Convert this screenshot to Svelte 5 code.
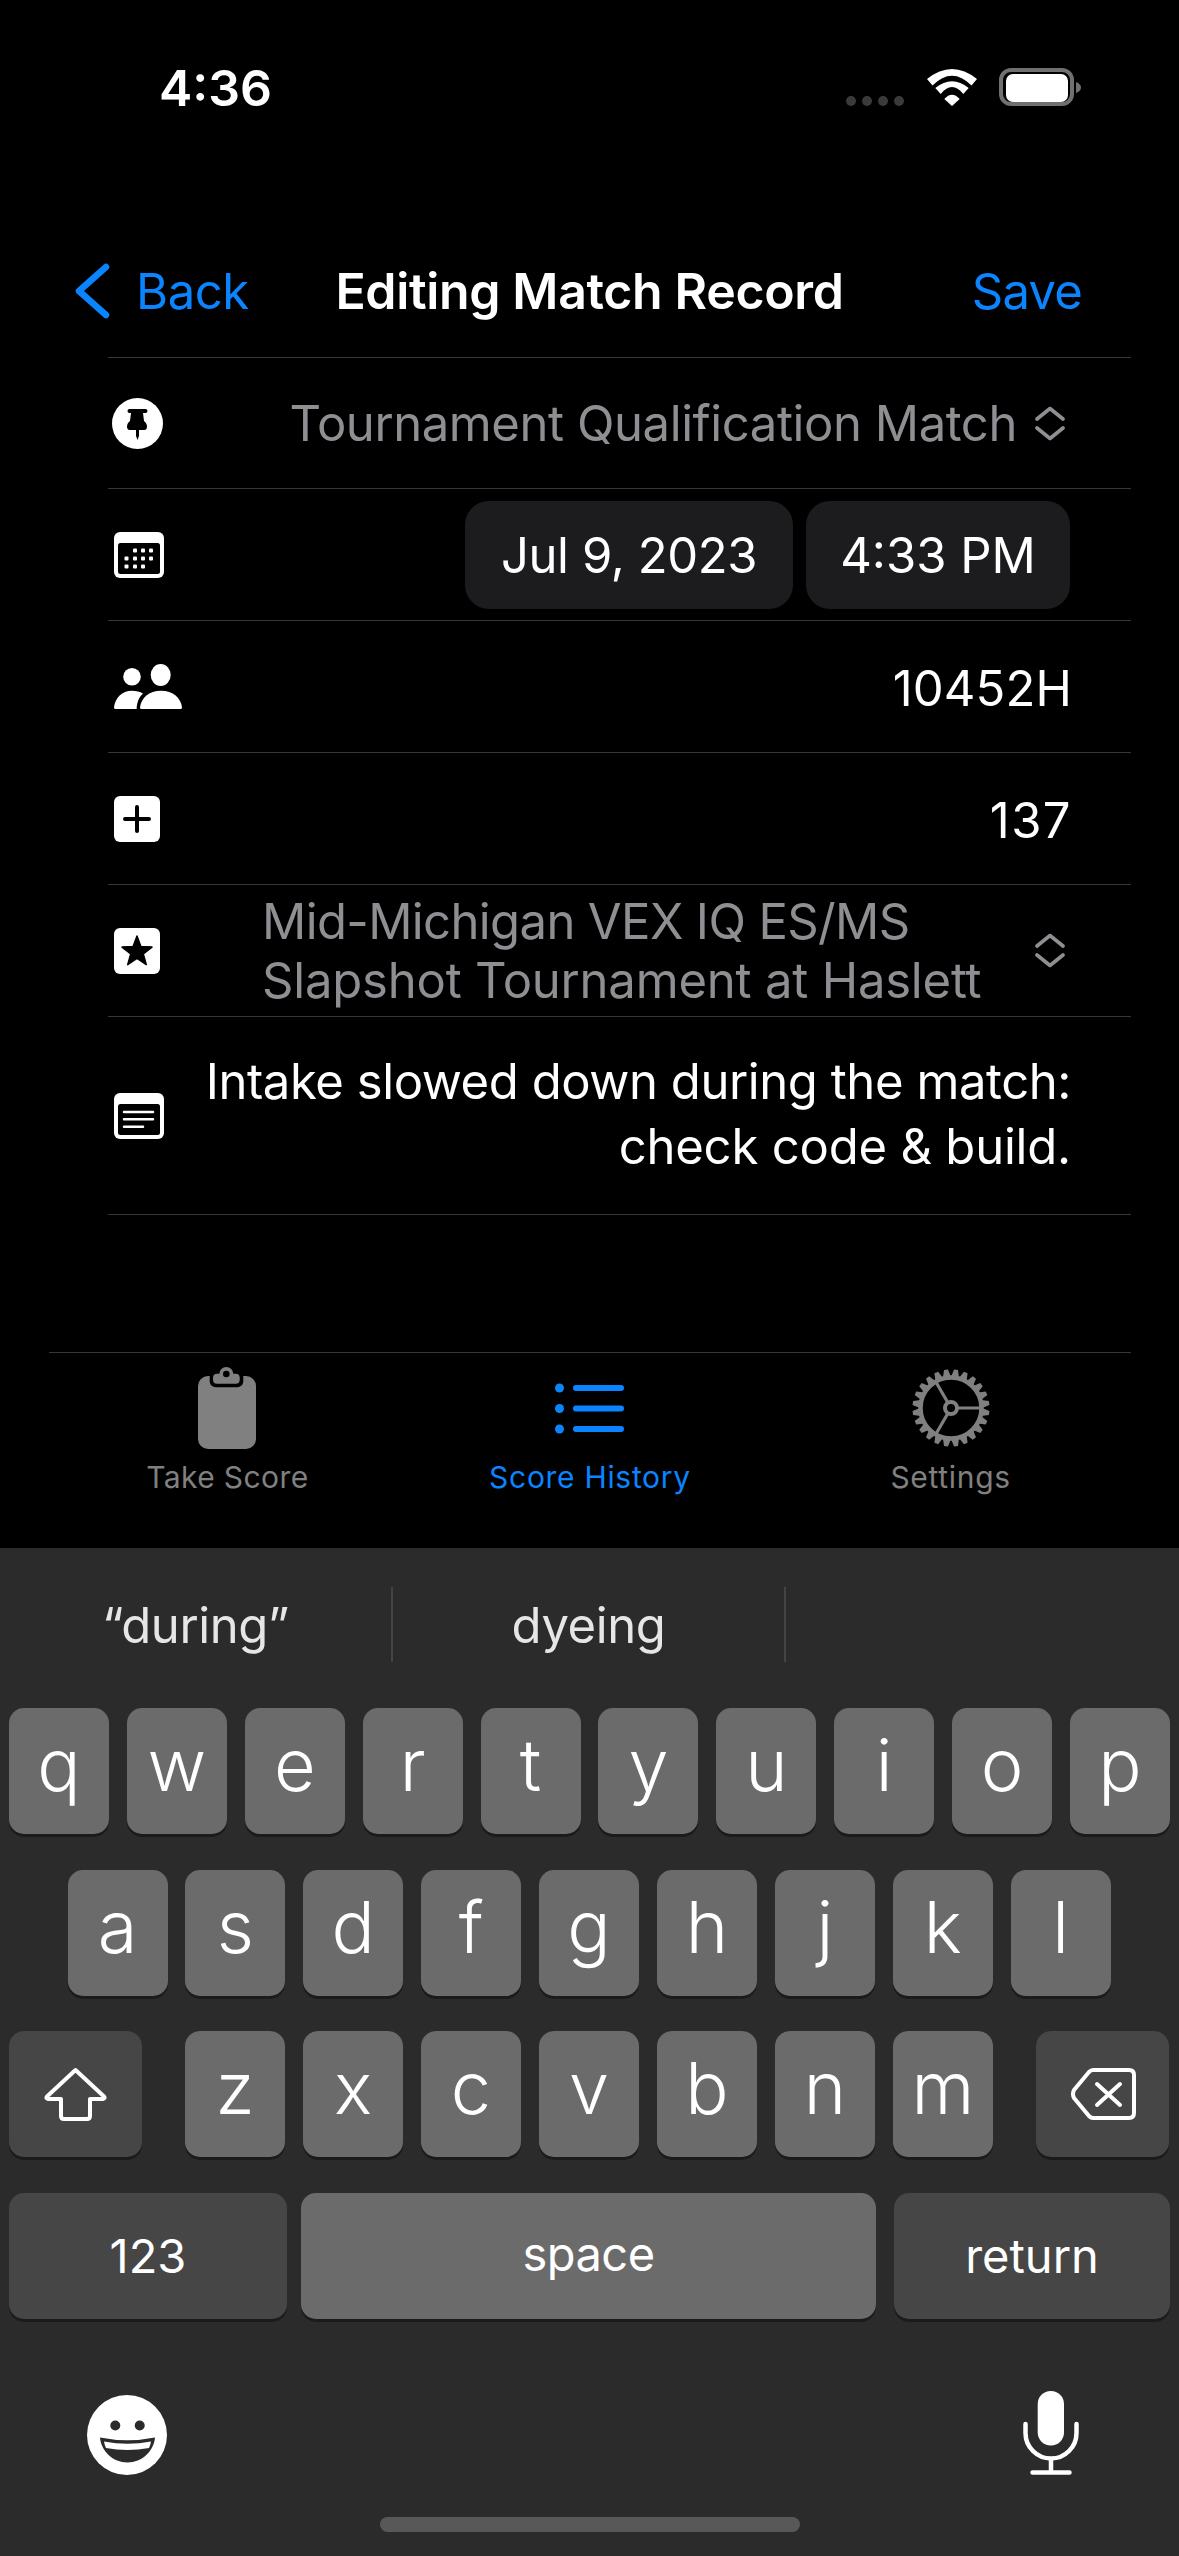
<script>
  const row1 = ['q','w','e','r','t','y','u','i','o','p'];
  const row2 = ['a','s','d','f','g','h','j','k','l'];
  const row3 = ['z','x','c','v','b','n','m'];
  const teeth = Array.from({ length: 24 }, (_, i) => i * 15);
</script>

<div class="screen">
  <div class="status">
    <span class="time">4:36</span>
    <div class="status-icons">
      <div class="dots"><i></i><i></i><i></i><i></i></div>
      <svg width="50" height="37" viewBox="0 0 50 37" fill="#fff">
        <path d="M0 10Q25-10 50 10L44.5 16.5Q25-3 5.5 16.5Z"/>
        <path d="M8.3 19Q25 5.5 41.7 19L36.3 25Q25 11 13.7 25Z"/>
        <path d="M17.3 30Q25 21.5 32.7 30L25 37Z"/>
      </svg>
      <svg width="82" height="38" viewBox="0 0 82 38">
        <rect x="2" y="2" width="71" height="34" rx="10" fill="none" stroke="#707070" stroke-width="4"/>
        <rect x="7" y="6" width="62" height="28" rx="7" fill="#fff"/>
        <path d="M77 14Q82 16 82 19.5Q82 23 77 25Z" fill="#707070"/>
      </svg>
    </div>
  </div>

  <div class="nav">
    <div class="nav-left">
      <svg width="35" height="56" viewBox="0 0 35 56" fill="none" stroke="#0a84ff" stroke-width="6.5" stroke-linecap="round" stroke-linejoin="round">
        <path d="M31 4L4 28L31 52"/>
      </svg>
      <span>Back</span>
    </div>
    <div class="nav-title">Editing Match Record</div>
    <div class="nav-right">Save</div>
  </div>

  <div class="list">
    <div class="row first">
      <svg class="icon pin" width="51" height="51" viewBox="0 0 51 51">
        <circle cx="25.5" cy="25.5" r="25.5" fill="#fff"/>
        <path d="M17.5 11H33.5a2 2 0 0 1 0 4H31l1 8c1.500 1.200 3 3 3 5.500 0 2-1 3.500-2.500 3.500H27v6l-1.500 4-1.500-4v-6H17.500C16 32 15 30.500 15 28.500c0-2.500 1.500-4.300 3-5.500l1-8h-1.500a2 2 0 0 1 0-4z" fill="#000"/>
      </svg>
      <span class="value gray">Tournament Qualification Match</span>
      <svg class="updown tight" width="30" height="35" viewBox="0 0 30 35"><path d="M2 13L15 2.500L28 13M2 22L15 32.500L28 22"/></svg>
    </div>

    <div class="row">
      <svg class="icon" width="50" height="46" viewBox="0 0 50 46">
        <rect width="50" height="46" rx="6" fill="#fff"/>
        <rect x="4" y="11" width="42" height="31" rx="2.500" fill="#000"/>
        <g fill="#fff">
          <rect x="19" y="16.500" width="4" height="4" rx="1"/><rect x="27" y="16.500" width="4" height="4" rx="1"/><rect x="35" y="16.500" width="4" height="4" rx="1"/>
          <rect x="10.500" y="24.500" width="4" height="4" rx="1"/><rect x="19" y="24.500" width="4" height="4" rx="1"/><rect x="27" y="24.500" width="4" height="4" rx="1"/><rect x="35" y="24.500" width="4" height="4" rx="1"/>
          <rect x="10.500" y="32.500" width="4" height="4" rx="1"/><rect x="19" y="32.500" width="4" height="4" rx="1"/><rect x="27" y="32.500" width="4" height="4" rx="1"/>
        </g>
      </svg>
      <div class="pickers">
        <div class="picker date">Jul 9, 2023</div>
        <div class="picker clock">4:33 PM</div>
      </div>
    </div>

    <div class="row">
      <svg class="icon" width="68" height="45" viewBox="0 0 68 45" fill="#fff">
        <circle cx="18" cy="12.700" r="8.800"/>
        <ellipse cx="46.700" cy="11" rx="10" ry="11"/>
        <path d="M0 43.500C1 34 8 26.700 18 26.700C22 26.700 26 27.500 29 29.500C25 33 22.700 39 22.700 45H1.500Q0 45 0 43.500Z"/>
        <path d="M26 43.500C27 34 35 26.700 47 26.700C59 26.700 67 34 68 43.500Q68 45 66.500 45H27.500Q26 45 26 43.500Z"/>
      </svg>
      <span class="value num">10452H</span>
    </div>

    <div class="row">
      <svg class="icon" width="46" height="46" viewBox="0 0 46 46">
        <rect width="46" height="46" rx="6" fill="#fff"/>
        <path d="M11 23H35M23 11V35" stroke="#000" stroke-width="4" stroke-linecap="round"/>
      </svg>
      <span class="value num wide">137</span>
    </div>

    <div class="row">
      <svg class="icon" width="46" height="46" viewBox="0 0 46 46">
        <rect width="46" height="46" rx="6" fill="#fff"/>
        <path d="M23 8L26.900 18.600L38 19.100L29.300 25.900L32.300 36.600L23 30.400L13.700 36.600L16.700 25.900L8 19.100L19.100 18.600Z" fill="#000" stroke="#000" stroke-width="1.500" stroke-linejoin="round"/>
      </svg>
      <div class="event gray"><span class="tighter">Mid-Michigan VEX IQ ES/MS</span><br /><span class="looser">Slapshot Tournament at Haslett</span></div>
      <svg class="updown push" width="30" height="35" viewBox="0 0 30 35"><path d="M2 13L15 2.500L28 13M2 22L15 32.500L28 22"/></svg>
    </div>

    <div class="row notes">
      <svg class="icon" width="50" height="46" viewBox="0 0 50 46">
        <rect width="50" height="46" rx="6" fill="#fff"/>
        <rect x="4" y="11" width="42" height="31" rx="2.500" fill="#000"/>
        <path d="M10 19H39M10 26.300H39M10 33.700H29" stroke="#fff" stroke-width="2.500" stroke-linecap="round"/>
      </svg>
      <div class="note-text">Intake slowed down during the match:<br /><span class="looser">check code &amp; build.</span></div>
    </div>
  </div>

  <div class="tabs">
    <div class="tab take">
      <div class="tab-icon">
        <svg width="58" height="82" viewBox="0 0 58 82">
          <rect y="9" width="58" height="73" rx="10" fill="#808080"/>
          <rect x="11.700" y="-4" width="33.600" height="24.300" rx="6" fill="#000"/>
          <rect x="15" y="6.700" width="26.700" height="10" rx="4" fill="#808080"/>
          <circle cx="28.300" cy="7" r="7" fill="#808080"/>
          <circle cx="28.300" cy="7" r="3.300" fill="#000"/>
        </svg>
      </div>
      <span>Take Score</span>
    </div>
    <div class="tab active">
      <div class="tab-icon">
        <svg width="70" height="51" viewBox="0 0 70 51">
          <g fill="#0a84ff"><circle cx="4.500" cy="5" r="4.500"/><circle cx="4.500" cy="25.500" r="4.500"/><circle cx="4.500" cy="46" r="4.500"/></g>
          <path d="M21 5H66M21 25.500H66M21 46H66" stroke="#0a84ff" stroke-width="6" stroke-linecap="round"/>
        </svg>
      </div>
      <span>Score History</span>
    </div>
    <div class="tab">
      <div class="tab-icon">
        <svg width="78" height="78" viewBox="0 0 78 78">
          <g fill="#808080">
            {#each teeth as a}
              <path d="M37 0.500H41L43 8H35Z" transform="rotate({a + 7.5} 39 39)"/>
            {/each}
          </g>
          <g fill="none" stroke="#808080">
            <circle cx="39" cy="39" r="30.500" stroke-width="4.500"/>
            <circle cx="39" cy="39" r="6" stroke-width="4"/>
            <path d="M46 39H68M35.500 33L24.500 14M35.500 45L24.500 64" stroke-width="3.200"/>
          </g>
        </svg>
      </div>
      <span>Settings</span>
    </div>
  </div>

  <div class="keyboard">
    <div class="suggestions">
      <div class="sug">“during”</div>
      <div class="sug">dyeing</div>
      <div class="sug last"></div>
    </div>

    <div class="keys">
      <div class="krow r1">
        {#each row1 as k}<div class="key">{k}</div>{/each}
      </div>
      <div class="krow r2">
        {#each row2 as k}<div class="key">{k}</div>{/each}
      </div>
      <div class="krow r3">
        <div class="key fn shift">
          <svg width="63" height="55" viewBox="0 0 63 55" fill="none" stroke="#fff" stroke-width="4" stroke-linejoin="round">
            <path d="M31.500 3L60 29.500Q61.500 31.500 59 32H46V49Q46 52 43 52H20Q17 52 17 49V32H4Q1.500 31.500 3 29.500Z"/>
          </svg>
        </div>
        <div class="letters">
          {#each row3 as k}<div class="key">{k}</div>{/each}
        </div>
        <div class="key fn back">
          <svg width="65" height="54" viewBox="0 0 65 54" fill="none" stroke="#fff" stroke-width="4" stroke-linejoin="round" stroke-linecap="round">
            <path d="M22 3H58Q63 3 63 8V46Q63 51 58 51H22Q20 51 18 49L3 31Q1 27 3 23L18 5Q20 3 22 3Z"/>
            <path d="M26 17L49 38M49 17L26 38"/>
          </svg>
        </div>
      </div>
      <div class="krow r4">
        <div class="key fn small n123">123</div>
        <div class="key small space">space</div>
        <div class="key fn small ret">return</div>
      </div>
    </div>

    <div class="kb-bottom">
      <svg width="80" height="80" viewBox="0 0 80 80">
        <circle cx="40" cy="40" r="40" fill="#fff"/>
        <circle cx="28.300" cy="30.500" r="5" fill="#2b2b2b"/>
        <circle cx="52.700" cy="30.500" r="5" fill="#2b2b2b"/>
        <path d="M13 42.500Q40.500 48 68 42.500C67 56 55 67.500 40.500 67.500C26 67.500 14 56 13 42.500Z" fill="#2b2b2b"/>
        <path d="M17 46.500Q40.500 51 64 46.500Q63.500 50 62 53Q40.500 57 19 53Q17.500 50 17 46.500Z" fill="#fff"/>
      </svg>
      <svg width="56" height="84" viewBox="0 0 56 84">
        <rect x="14.700" width="26.300" height="54.600" rx="13" fill="#fff"/>
        <path d="M2.500 33V42A25.500 25.500 0 0 0 53.500 42V33M28 68V81M9.500 81.500H46.500" fill="none" stroke="#fff" stroke-width="4.500" stroke-linecap="round"/>
      </svg>
    </div>

    <div class="home"></div>
  </div>
</div>

<style>
  :global(body) {
    margin: 0;
    background: #000;
  }
  .screen {
    width: 1179px;
    height: 2556px;
    background: #000;
    color: #fff;
    font-family: Inter, "Noto Sans", sans-serif;
    display: flex;
    flex-direction: column;
    overflow: hidden;
  }

  .status {
    height: 130px;
    box-sizing: border-box;
    padding: 63px 98px 0 159px;
    display: flex;
    align-items: flex-start;
  }
  .time {
    font-size: 50px;
    line-height: 50px;
    font-weight: 600;
  }
  .status-icons {
    margin-left: auto;
    margin-top: 5px;
    height: 38px;
    display: flex;
    align-items: flex-end;
    gap: 22px;
  }
  .dots {
    display: flex;
    gap: 6px;
    margin-right: 1px;
  }
  .dots i {
    width: 10px;
    height: 10px;
    border-radius: 50%;
    background: #3a3a3a;
  }

  .nav {
    height: 227px;
    box-sizing: border-box;
    padding-top: 95px;
    display: grid;
    grid-template-columns: 1fr auto 1fr;
    align-items: center;
    font-size: 49px;
    letter-spacing: -0.4px;
  }
  .nav-left {
    display: flex;
    align-items: center;
    gap: 26px;
    padding-left: 75px;
    color: #0a84ff;
  }
  .nav-title {
    font-size: 50px;
    font-weight: 600;
    letter-spacing: -0.35px;
  }
  .nav-right {
    text-align: right;
    padding-right: 97px;
    color: #0a84ff;
    letter-spacing: -0.8px;
  }

  .list {
    margin-left: 108px;
    width: 1023px;
    border-top: 1px solid #38383a;
    font-size: 49px;
    letter-spacing: -0.42px;
  }
  .row {
    height: 132px;
    box-sizing: border-box;
    border-bottom: 1px solid #38383a;
    display: flex;
    align-items: center;
    padding: 0 60px 0 6px;
  }
  .row.first {
    height: 131px;
  }
  .row.notes {
    height: 198px;
  }
  .icon {
    flex: none;
  }
  .icon.pin {
    margin-left: -2px;
  }
  .value {
    margin-left: auto;
  }
  .value.num {
    margin-right: -1px;
    padding-top: 3px;
    letter-spacing: 0.1px;
  }
  .value.num.wide {
    letter-spacing: 1.400px;
  }
  .gray {
    color: #8e8e93;
  }
  .updown {
    flex: none;
    margin: 0 6px 0 19px;
    fill: none;
    stroke: #8e8e93;
    stroke-width: 3.600;
    stroke-linecap: round;
    stroke-linejoin: round;
  }
  .updown.tight {
    margin-left: 18px;
  }
  .updown.push {
    margin-left: auto;
  }
  .pickers {
    margin-left: auto;
    margin-right: 1px;
    display: flex;
    gap: 13px;
  }
  .picker {
    height: 108px;
    box-sizing: border-box;
    padding-top: 2px;
    display: flex;
    align-items: center;
    justify-content: center;
    background: #1c1c1e;
    border-radius: 24px;
  }
  .picker.date {
    width: 328px;
  }
  .picker.clock {
    width: 264px;
    letter-spacing: 0;
  }
  .event {
    margin-left: 102px;
    line-height: 59px;
    white-space: nowrap;
  }
  .tighter {
    letter-spacing: -0.620px;
  }
  .looser {
    letter-spacing: -0.200px;
  }
  .note-text {
    margin-left: auto;
    padding-bottom: 3px;
    text-align: right;
    line-height: 65px;
    white-space: nowrap;
  }

  .tabs {
    margin: 137px 0 0 49px;
    width: 1082px;
    height: 196px;
    box-sizing: border-box;
    border-top: 1px solid #38383a;
    display: flex;
    flex: none;
  }
  .tab {
    flex: none;
    width: 33.333%;
    box-sizing: border-box;
    display: flex;
    flex-direction: column;
    align-items: center;
    padding-top: 13px;
    font-size: 30px;
    font-weight: 400;
    line-height: 36px;
    letter-spacing: 0.7px;
    color: #808080;
  }
  .tab.take {
    padding-right: 4px;
    letter-spacing: 0.4px;
  }
  .tab.active {
    color: #0a84ff;
  }
  .tab-icon {
    height: 84px;
    display: flex;
    align-items: center;
    margin-bottom: 9px;
  }

  .keyboard {
    flex: 1;
    background: #2b2b2b;
    display: flex;
    flex-direction: column;
  }
  .suggestions {
    height: 160px;
    box-sizing: border-box;
    padding-top: 39px;
    display: flex;
    align-items: flex-start;
    font-size: 49px;
    letter-spacing: -0.4px;
    color: #e6e6e6;
  }
  .sug {
    width: 393px;
    height: 75px;
    box-sizing: border-box;
    border-right: 2px solid #444;
    padding-top: 2px;
    display: flex;
    align-items: center;
    justify-content: center;
  }
  .sug.last {
    border-right: 0;
  }
  .keys {
    display: flex;
    flex-direction: column;
    gap: 35.500px;
  }
  .krow {
    display: flex;
    gap: 17.900px;
  }
  .r1 {
    padding-left: 9px;
  }
  .r2 {
    padding-left: 67.500px;
  }
  .r3 {
    padding-left: 9px;
    gap: 43px;
  }
  .r4 {
    padding-left: 9px;
    gap: 14px;
  }
  .letters {
    display: flex;
    gap: 18px;
  }
  .key {
    width: 100px;
    height: 126px;
    flex: none;
    box-sizing: border-box;
    border-radius: 15px;
    background: #6b6b6b;
    box-shadow: 0 3px 0 #1b1b1b;
    display: flex;
    align-items: center;
    justify-content: center;
    font-size: 72px;
    font-weight: 300;
    padding-bottom: 13px;
  }
  .key.fn {
    background: #464646;
  }
  .key.shift,
  .key.back {
    width: 133px;
    padding-bottom: 0;
  }
  .key.back {
    padding-left: 2px;
  }
  .key.small {
    font-size: 47px;
    font-weight: 400;
    padding-bottom: 0;
  }
  .n123 {
    width: 278px;
  }
  .key.space {
    width: 575px;
    margin-right: 4px;
    letter-spacing: -0.5px;
    padding-bottom: 5px;
  }
  .key.ret {
    width: 276px;
  }
  .kb-bottom {
    margin-top: 72px;
    height: 84px;
    padding: 0 100px 0 87px;
    display: flex;
    justify-content: space-between;
    align-items: flex-end;
  }
  .home {
    margin: 42px auto 0;
    width: 420px;
    height: 15px;
    border-radius: 8px;
    background: #585858;
  }
</style>
